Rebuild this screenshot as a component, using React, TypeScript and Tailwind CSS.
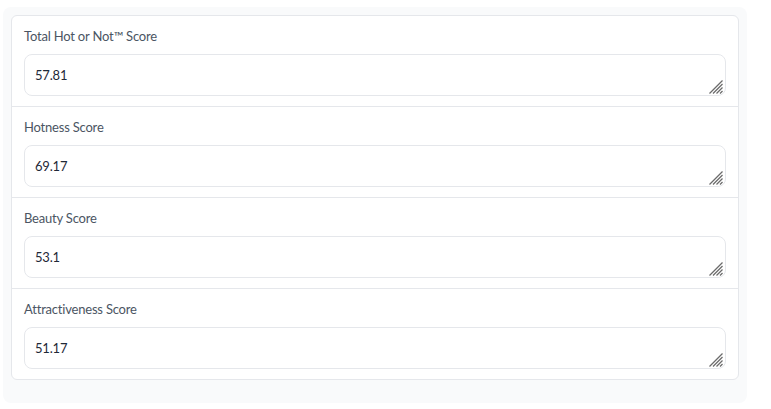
const scores = [
  { label: "Total Hot or Not™ Score", value: "57.81" },
  { label: "Hotness Score", value: "69.17" },
  { label: "Beauty Score", value: "53.1" },
  { label: "Attractiveness Score", value: "51.17" },
];

function Grip() {
  return (
    <svg
      width="14"
      height="14"
      viewBox="0 0 14 14"
      className="absolute right-[3px] bottom-[2px] pointer-events-none"
    >
      <g stroke="#6b6b6b" strokeWidth="1.3">
        <line x1="0.5" y1="13.5" x2="13.5" y2="0.5" />
        <line x1="4" y1="13.5" x2="13.5" y2="4" />
        <line x1="7.5" y1="13.5" x2="13.5" y2="7.5" />
        <line x1="11" y1="13.5" x2="13.5" y2="11" />
      </g>
    </svg>
  );
}

export default function App() {
  return (
    <div className="w-[771px] h-[409px] bg-white pt-[7px] pl-[3px] font-['Lato',sans-serif]">
      <div className="w-[744px] h-[396px] rounded-lg bg-[#f9fafb] p-2">
        <div className="rounded-md border border-[#e5e7eb] bg-white overflow-hidden">
          {scores.map((s, i) => (
            <div
              key={s.label}
              className={`px-3 py-[10px] ${i > 0 ? "border-t border-[#e5e7eb]" : ""}`}
            >
              <div className="text-[13px] tracking-[-0.2px] leading-5 text-[#4b5563] mb-2">
                {s.label}
              </div>
              <div className="relative">
                <textarea
                  readOnly
                  rows={1}
                  value={s.value}
                  className="block w-full h-[42px] resize-none rounded-lg border border-[#e5e7eb] px-[10px] py-[10px] text-[13px] tracking-[-0.2px] leading-5 text-[#1f2937] outline-none"
                />
                <Grip />
              </div>
            </div>
          ))}
        </div>
      </div>
    </div>
  );
}
